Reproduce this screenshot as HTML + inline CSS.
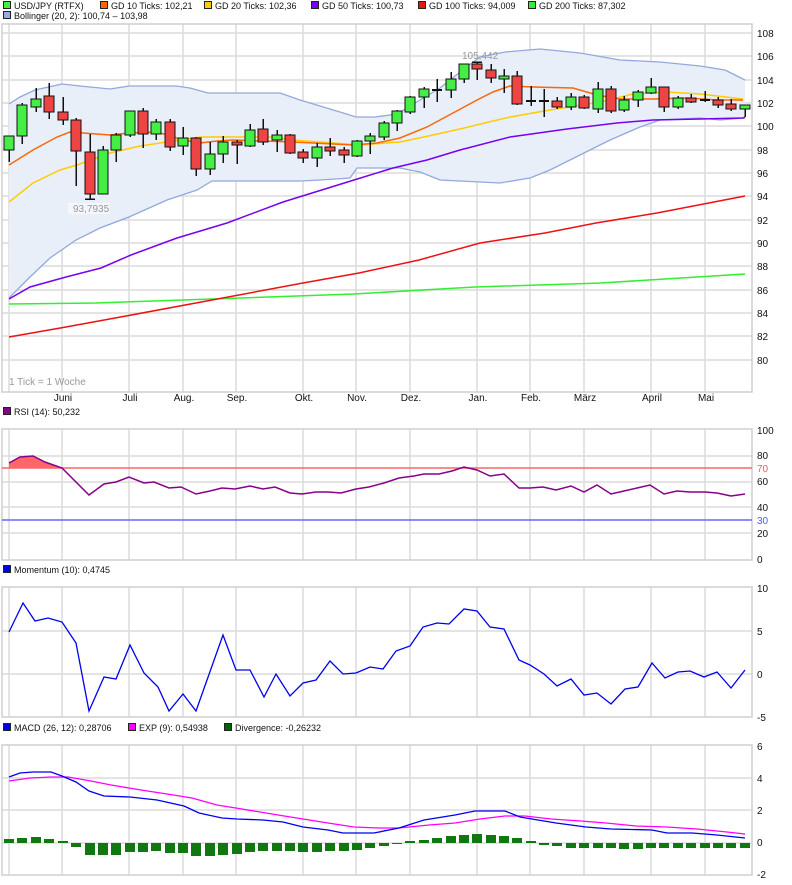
<!DOCTYPE html>
<html><head><meta charset="utf-8"><style>
html,body{margin:0;padding:0;background:#fff;width:792px;height:885px;overflow:hidden}
svg{display:block;font-family:"Liberation Sans","DejaVu Sans",sans-serif;font-size:10px}
.g{stroke:#dcdcdc;stroke-width:1.5;fill:none}
.f{stroke:#cfcfcf;stroke-width:1.5;fill:none}
.ax{fill:#111;font-size:10px}
.w{stroke:#111;stroke-width:1.5}
.cg{fill:#44ee44;stroke:#111;stroke-width:1.2}
.cr{fill:#ee4444;stroke:#111;stroke-width:1.2}
.lg{fill:#111;font-size:9px}
</style></head><body>
<svg width="792" height="885" viewBox="0 0 792 885" xmlns="http://www.w3.org/2000/svg">
<!-- legend -->
<g class="lg">
<rect x="3.5" y="1.5" width="7" height="7" fill="#44ee44" stroke="#222"/><text x="14" y="9">USD/JPY (RTFX)</text>
<rect x="100.5" y="1.5" width="7" height="7" fill="#ff6600" stroke="#222"/><text x="111" y="9">GD 10 Ticks: 102,21</text>
<rect x="204.5" y="1.5" width="7" height="7" fill="#ffcc00" stroke="#222"/><text x="215" y="9">GD 20 Ticks: 102,36</text>
<rect x="311.5" y="1.5" width="7" height="7" fill="#7700ee" stroke="#222"/><text x="322" y="9">GD 50 Ticks: 100,73</text>
<rect x="418.5" y="1.5" width="7" height="7" fill="#ee1111" stroke="#222"/><text x="429" y="9">GD 100 Ticks: 94,009</text>
<rect x="528.5" y="1.5" width="7" height="7" fill="#33ee33" stroke="#222"/><text x="539" y="9">GD 200 Ticks: 87,302</text>
<rect x="3.5" y="11.5" width="7" height="7" fill="#99aadd" stroke="#222"/><text x="14" y="19">Bollinger (20, 2): 100,74 – 103,98</text>
</g>
<!-- main grid -->
<g class="g">
<path d="M2 33H752M2 56H752M2 80H752M2 103H752M2 126H752M2 150H752M2 173H752M2 196H752M2 220H752M2 243H752M2 266H752M2 290H752M2 313H752M2 336H752M2 360H752"/>
<path d="M9 24V392M62 24V392M129 24V392M183 24V392M236 24V392M303 24V392M356 24V392M410 24V392M477 24V392M530 24V392M584 24V392M651 24V392M705 24V392"/>
</g>
<rect x="2" y="24" width="750" height="368" class="f"/>
<!-- bollinger fill -->
<path fill="#e9eff9" d="M9,104 L20,97 L35,90 L62,84 L80,86 L110,89 L129,86 L176,86 L190,88 L208,93 L280,93 L300,100 L340,112 L356,117 L375,117 L390,115 L402,111 L420,100 L440,88 L460,72 L480,57 L505,52 L540,49 L580,53 L620,60 L660,62 L700,66 L725,70 L745,80 L745,118 L720,120 L700,118 L660,120 L640,127 L610,140 L580,155 L550,170 L530,178 L500,183 L440,180 L420,172 L400,168 L357,168 L350,178 L320,180 L300,181 L212,181 L197,190 L167,200 L129,217 L100,228 L76,240 L50,258 L30,277 L9,298 Z"/>
<g fill="none" stroke="#93a8dc" stroke-width="1.3">
<path d="M9,104 L20,97 L35,90 L62,84 L80,86 L110,89 L129,86 L176,86 L190,88 L208,93 L280,93 L300,100 L340,112 L356,117 L375,117 L390,115 L402,111 L420,100 L440,88 L460,72 L480,57 L505,52 L540,49 L580,53 L620,60 L660,62 L700,66 L725,70 L745,80"/>
<path d="M9,298 L30,277 L50,258 L76,240 L100,228 L129,217 L167,200 L197,190 L212,181 L300,181 L320,180 L350,178 L357,168 L400,168 L420,172 L440,180 L500,183 L530,178 L550,170 L580,155 L610,140 L640,127 L660,120 L700,118 L720,120 L745,118"/>
</g>
<!-- MAs -->
<g fill="none" stroke-width="1.5">
<path stroke="#33ee33" d="M9,304 L96,303 L212,299 L354,294 L475,287 L601,283 L745,274"/>
<path stroke="#ee1111" d="M9,337 L66,327 L126,316 L212,300 L303,283 L359,273 L419,260 L480,243 L545,233 L596,223 L657,213 L745,196"/>
<path stroke="#7700ee" d="M9,299 L30,287 L66,277 L101,268 L131,255 L177,238 L227,223 L283,202 L354,180 L393,168 L427,160 L460,150 L510,137 L567,129 L617,123 L653,120 L700,119 L743,118 L745,117"/>
<path stroke="#ffcc00" d="M9,202 L33,183 L60,170 L77,165 L110,153 L140,146 L167,142 L200,137 L270,137 L293,140 L360,145 L400,142 L433,135 L460,129 L493,121 L510,117 L550,110 L600,102 L633,94 L667,92 L700,94 L743,99"/>
<path stroke="#ff6600" d="M9,165 L33,150 L57,137 L70,132 L83,133 L110,135 L129,133 L157,132 L167,135 L183,140 L200,143 L217,141 L233,140 L293,142 L353,145 L377,143 L400,138 L427,127 L453,113 L477,100 L493,92 L510,86 L533,87 L573,88 L597,95 L620,99 L653,99 L687,98 L717,100 L743,100"/>
</g>
<!-- candles -->
<g shape-rendering="crispEdges">
<g class="w">
<path d="M9 136V162M22 103V144M36 88V112M49 83V119M63 97V125M76 118V186M90 134V199M85 199H95M103 146V194M116 133V162M130 111V137M143 108V148M156 119V140M170 119V151M183 127V155M196 137V176M210 142V175M223 136V163M237 140V164M250 124V147M263 119V145M277 130V152M290 134V154M303 149V163M317 143V167M330 138V156M344 147V163M357 140V157M370 133V154M384 121V140M397 110V131M410 96V114M424 87V108M437 79V102M451 72V98M464 64V83M477 62V80M472 62H482M491 64V83M504 69V93M517 71V105M531 86V106M544 89V117M557 97V109M571 93V110M584 95V109M598 82V113M611 86V113M624 96V112M638 90V107M651 78V94M664 87V112M678 96V109M691 94V103M705 91V102M718 97V108M731 99V111M745 105V117"/>
</g>
<rect class="cg" x="4" y="136" width="10" height="14"/>
<rect class="cg" x="17" y="105" width="10" height="31"/>
<rect class="cg" x="31" y="99" width="10" height="8"/>
<rect class="cr" x="44" y="96" width="10" height="16"/>
<rect class="cr" x="58" y="112" width="10" height="8"/>
<rect class="cr" x="71" y="120" width="10" height="31"/>
<rect class="cr" x="85" y="152" width="10" height="42"/>
<rect class="cg" x="98" y="150" width="10" height="44"/>
<rect class="cg" x="111" y="135" width="10" height="15"/>
<rect class="cg" x="125" y="111" width="10" height="24"/>
<rect class="cr" x="138" y="111" width="10" height="23"/>
<rect class="cg" x="151" y="122" width="10" height="12"/>
<rect class="cr" x="165" y="122" width="10" height="25"/>
<rect class="cg" x="178" y="138" width="10" height="8"/>
<rect class="cr" x="191" y="138" width="10" height="31"/>
<rect class="cg" x="205" y="154" width="10" height="15"/>
<rect class="cg" x="218" y="142" width="10" height="12"/>
<rect class="cr" x="232" y="142" width="10" height="3"/>
<rect class="cg" x="245" y="130" width="10" height="16"/>
<rect class="cr" x="258" y="129" width="10" height="13"/>
<rect class="cg" x="272" y="135" width="10" height="5"/>
<rect class="cr" x="285" y="135" width="10" height="18"/>
<rect class="cr" x="298" y="152" width="10" height="6"/>
<rect class="cg" x="312" y="147" width="10" height="11"/>
<rect class="cr" x="325" y="147" width="10" height="4"/>
<rect class="cr" x="339" y="150" width="10" height="5"/>
<rect class="cg" x="352" y="141" width="10" height="15"/>
<rect class="cg" x="365" y="136" width="10" height="5"/>
<rect class="cg" x="379" y="123" width="10" height="14"/>
<rect class="cg" x="392" y="111" width="10" height="12"/>
<rect class="cg" x="405" y="97" width="10" height="15"/>
<rect class="cg" x="419" y="89" width="10" height="8"/>
<rect class="cg" x="446" y="79" width="10" height="11"/>
<rect class="cg" x="459" y="64" width="10" height="15"/>
<rect class="cr" x="472" y="64" width="10" height="5"/>
<rect class="cr" x="486" y="70" width="10" height="8"/>
<rect class="cg" x="499" y="76" width="10" height="3"/>
<rect class="cr" x="512" y="76" width="10" height="28"/>
<rect class="cr" x="552" y="101" width="10" height="6"/>
<rect class="cg" x="566" y="97" width="10" height="10"/>
<rect class="cr" x="579" y="97" width="10" height="11"/>
<rect class="cg" x="593" y="89" width="10" height="20"/>
<rect class="cr" x="606" y="89" width="10" height="22"/>
<rect class="cg" x="619" y="100" width="10" height="10"/>
<rect class="cg" x="633" y="92" width="10" height="8"/>
<rect class="cg" x="646" y="87" width="10" height="6"/>
<rect class="cr" x="659" y="87" width="10" height="20"/>
<rect class="cg" x="673" y="98" width="10" height="9"/>
<rect class="cr" x="686" y="98" width="10" height="4"/>
<rect class="cr" x="713" y="100" width="10" height="5"/>
<rect class="cr" x="726" y="104" width="10" height="5"/>
<rect class="cg" x="740" y="105" width="10" height="4"/>
<path stroke="#111" stroke-width="2" d="M432 90H442M526 101H536M539 101H549M700 100H710"/>
</g>
<!-- value labels -->
<rect x="68" y="203" width="42" height="11" fill="#f4f6fb"/>
<text x="73" y="212" fill="#999">93,7935</text>
<text x="462" y="59" fill="#999">105,442</text>
<text x="9" y="385" fill="#999">1 Tick = 1 Woche</text>
<!-- main axis labels -->
<g class="ax">
<text x="757" y="37">108</text><text x="757" y="60">106</text><text x="757" y="84">104</text><text x="757" y="107">102</text><text x="757" y="130">100</text><text x="757" y="154">98</text><text x="757" y="177">96</text><text x="757" y="200">94</text><text x="757" y="224">92</text><text x="757" y="247">90</text><text x="757" y="270">88</text><text x="757" y="294">86</text><text x="757" y="317">84</text><text x="757" y="340">82</text><text x="757" y="364">80</text>
</g>
<g class="ax" text-anchor="middle">
<text x="63" y="401">Juni</text><text x="130" y="401">Juli</text><text x="184" y="401">Aug.</text><text x="237" y="401">Sep.</text><text x="304" y="401">Okt.</text><text x="357" y="401">Nov.</text><text x="411" y="401">Dez.</text><text x="478" y="401">Jan.</text><text x="531" y="401">Feb.</text><text x="585" y="401">März</text><text x="652" y="401">April</text><text x="706" y="401">Mai</text>
</g>
<!-- RSI -->
<rect x="3.5" y="407.5" width="7" height="7" fill="#880088" stroke="#222"/><text class="lg" x="14" y="415">RSI (14): 50,232</text>
<g class="g"><path d="M2 456H752M2 482H752M2 507H752M2 533H752M9 429V560M62 429V560M129 429V560M183 429V560M236 429V560M303 429V560M356 429V560M410 429V560M477 429V560M530 429V560M584 429V560M651 429V560M705 429V560"/></g>
<rect x="2" y="429" width="750" height="131" class="f"/>
<path fill="#ff6666" d="M9,468 L9,463 L20,457 L33,456 L45,462 L62,468 Z"/>
<path stroke="#ff6666" stroke-width="1.5" d="M2 468H752"/>
<path stroke="#6666ff" stroke-width="1.5" d="M2 520H752"/>
<path fill="none" stroke="#880088" stroke-width="1.5" d="M9,463 L20,457 L33,456 L45,462 L62,468 L89,495 L104,484 L116,482 L129,477 L144,483 L154,482 L169,488 L181,487 L196,494 L210,491 L222,488 L235,489 L250,486 L263,489 L275,487 L290,493 L302,494 L316,492 L328,492 L341,493 L356,489 L369,487 L384,483 L399,478 L414,476 L424,474 L439,474 L452,471 L464,467 L477,470 L490,476 L504,474 L519,488 L530,488 L543,487 L556,490 L571,486 L584,492 L597,485 L611,494 L624,491 L637,488 L650,485 L664,494 L677,491 L690,492 L705,492 L717,493 L731,496 L745,494"/>
<g class="ax"><text x="757" y="434">100</text><text x="757" y="459">80</text><text x="757" y="472" fill="#ff5555">70</text><text x="757" y="485">60</text><text x="757" y="511">40</text><text x="757" y="524" fill="#5555ff">30</text><text x="757" y="537">20</text><text x="757" y="563">0</text></g>
<!-- Momentum -->
<rect x="3.5" y="565.5" width="7" height="7" fill="#0000ee" stroke="#222"/><text class="lg" x="14" y="573">Momentum (10): 0,4745</text>
<g class="g"><path d="M2 631H752M2 674H752M9 587V717M62 587V717M129 587V717M183 587V717M236 587V717M303 587V717M356 587V717M410 587V717M477 587V717M530 587V717M584 587V717M651 587V717M705 587V717"/></g>
<rect x="2" y="587" width="750" height="130" class="f"/>
<path fill="none" stroke="#0000ee" stroke-width="1.3" d="M9,632 L23,603 L35,621 L48,618 L62,622 L76,643 L89,711 L104,677 L116,679 L130,645 L144,673 L158,687 L169,711 L183,694 L196,711 L223,635 L236,670 L250,670 L264,697 L276,674 L290,696 L303,683 L316,680 L330,661 L343,674 L356,673 L370,667 L383,669 L396,651 L410,646 L423,627 L437,623 L449,624 L464,609 L477,611 L490,627 L504,629 L519,660 L530,665 L544,674 L557,686 L571,679 L584,695 L597,693 L611,704 L625,689 L638,687 L652,663 L665,678 L678,672 L690,671 L704,677 L717,672 L731,688 L745,670"/>
<g class="ax"><text x="757" y="592">10</text><text x="757" y="635">5</text><text x="757" y="678">0</text><text x="757" y="721">-5</text></g>
<!-- MACD -->
<g class="lg">
<rect x="3.5" y="723.5" width="7" height="7" fill="#0000ee" stroke="#222"/><text x="14" y="731">MACD (26, 12): 0,28706</text>
<rect x="128.5" y="723.5" width="7" height="7" fill="#ff00ff" stroke="#222"/><text x="139" y="731">EXP (9): 0,54938</text>
<rect x="224.5" y="723.5" width="7" height="7" fill="#006600" stroke="#222"/><text x="235" y="731">Divergence: -0,26232</text>
</g>
<g class="g"><path d="M2 778H752M2 810H752M2 843H752M9 745V875M62 745V875M129 745V875M183 745V875M236 745V875M303 745V875M356 745V875M410 745V875M477 745V875M530 745V875M584 745V875M651 745V875M705 745V875"/></g>
<rect x="2" y="745" width="750" height="130" class="f"/>
<g fill="#117711" shape-rendering="crispEdges">
<rect x="4" y="839" width="10" height="4"/><rect x="17" y="838" width="10" height="5"/><rect x="31" y="837" width="10" height="6"/><rect x="44" y="839" width="10" height="4"/><rect x="58" y="841" width="10" height="2"/>
<rect x="71" y="843" width="10" height="4"/><rect x="85" y="843" width="10" height="12"/><rect x="98" y="843" width="10" height="12"/><rect x="111" y="843" width="10" height="12"/><rect x="125" y="843" width="10" height="9"/>
<rect x="138" y="843" width="10" height="9"/><rect x="151" y="843" width="10" height="8"/><rect x="165" y="843" width="10" height="10"/><rect x="178" y="843" width="10" height="10"/><rect x="191" y="843" width="10" height="13"/>
<rect x="205" y="843" width="10" height="13"/><rect x="218" y="843" width="10" height="12"/><rect x="232" y="843" width="10" height="11"/><rect x="245" y="843" width="10" height="9"/><rect x="258" y="843" width="10" height="8"/>
<rect x="272" y="843" width="10" height="8"/><rect x="285" y="843" width="10" height="8"/><rect x="298" y="843" width="10" height="9"/><rect x="312" y="843" width="10" height="9"/><rect x="325" y="843" width="10" height="8"/>
<rect x="339" y="843" width="10" height="8"/><rect x="352" y="843" width="10" height="7"/><rect x="365" y="843" width="10" height="5"/><rect x="379" y="843" width="10" height="3"/><rect x="392" y="843" width="10" height="1"/>
<rect x="405" y="841" width="10" height="2"/><rect x="419" y="840" width="10" height="3"/><rect x="432" y="838" width="10" height="5"/><rect x="446" y="836" width="10" height="7"/><rect x="459" y="835" width="10" height="8"/>
<rect x="472" y="834" width="10" height="9"/><rect x="486" y="835" width="10" height="8"/><rect x="499" y="836" width="10" height="7"/><rect x="512" y="838" width="10" height="5"/><rect x="526" y="841" width="10" height="2"/>
<rect x="539" y="843" width="10" height="2"/><rect x="552" y="843" width="10" height="3"/><rect x="566" y="843" width="10" height="5"/><rect x="579" y="843" width="10" height="5"/><rect x="593" y="843" width="10" height="5"/>
<rect x="606" y="843" width="10" height="5"/><rect x="619" y="843" width="10" height="6"/><rect x="633" y="843" width="10" height="6"/><rect x="646" y="843" width="10" height="5"/><rect x="659" y="843" width="10" height="5"/>
<rect x="673" y="843" width="10" height="5"/><rect x="686" y="843" width="10" height="5"/><rect x="700" y="843" width="10" height="5"/><rect x="713" y="843" width="10" height="5"/><rect x="726" y="843" width="10" height="5"/><rect x="740" y="843" width="10" height="5"/>
</g>
<path fill="none" stroke="#ff00ff" stroke-width="1.3" d="M9,781 L30,778 L51,777 L68,777 L91,781 L111,785 L141,790 L167,794 L192,798 L217,805 L242,809 L278,815 L303,819 L328,823 L354,827 L379,828 L399,828 L429,825 L455,823 L480,819 L505,816 L525,816 L551,819 L581,821 L606,823 L636,826 L667,827 L697,829 L727,832 L745,834"/>
<path fill="none" stroke="#0000ee" stroke-width="1.3" d="M9,777 L20,773 L33,772 L51,772 L62,776 L76,782 L89,791 L104,796 L130,797 L157,800 L184,806 L199,813 L222,818 L237,819 L263,820 L283,822 L303,827 L328,830 L343,833 L374,833 L399,828 L424,820 L455,815 L475,811 L505,811 L520,817 L556,823 L586,827 L611,829 L652,830 L667,833 L692,833 L717,835 L745,838"/>
<g class="ax"><text x="757" y="750">6</text><text x="757" y="782">4</text><text x="757" y="814">2</text><text x="757" y="846">0</text><text x="757" y="878">-2</text></g>
</svg>
</body></html>
